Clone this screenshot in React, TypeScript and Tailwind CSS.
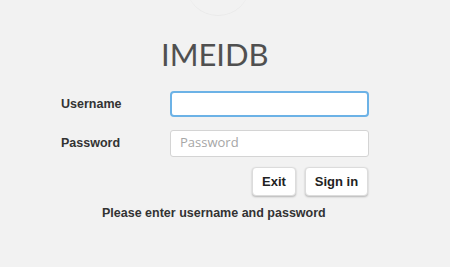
export default function App() {
  return (
    <div className="w-[450px] h-[267px] bg-[#f2f2f2] relative overflow-hidden" style={{ fontFamily: '"Liberation Sans", Arial, sans-serif' }}>
      <div className="absolute left-[186px] top-[-48px] w-[64px] h-[64px] rounded-full border-b border-[#e9e9e9]" />
      <div className="flex flex-col">
        <div className="pt-[34px] h-[88px] pl-[161px] text-[31px] leading-[40px] text-[#505050]" style={{ fontFamily: 'Lato, "Open Sans", sans-serif' }}>IMEIDB</div>
        <div className="flex items-center h-[30px] mt-[1px]">
          <div className="w-[170px] pl-[61px] text-[12.5px] font-bold text-[#333]">Username</div>
          <div className="w-[199px] h-[26px] rounded-[4px] border-2 border-[#6cb2e6] bg-white" />
        </div>
        <div className="flex items-center h-[28px] mt-[10px]">
          <div className="w-[170px] pl-[61px] text-[12.5px] font-bold text-[#333]">Password</div>
          <div className="w-[199px] h-[27px] rounded-[3px] border border-[#d4d4d4] bg-white flex items-center pl-[9px] text-[13px] text-[#a6a6a6]" style={{ fontFamily: '"Open Sans", sans-serif' }}>Password</div>
        </div>
        <div className="flex justify-end gap-[9px] pr-[82px] mt-[10px]">
          <div className="w-[44px] h-[29px] rounded-[4px] bg-white border border-[#dcdcdc] shadow-[0_1px_2px_rgba(0,0,0,0.25)] flex items-center justify-center text-[13px] font-bold text-[#222]">Exit</div>
          <div className="w-[63px] h-[29px] rounded-[4px] bg-white border border-[#dcdcdc] shadow-[0_1px_2px_rgba(0,0,0,0.25)] flex items-center justify-center text-[13px] font-bold text-[#222]">Sign in</div>
        </div>
        <div className="mt-[8px] pl-[102px] text-[12.5px] font-bold text-[#333]">Please enter username and password</div>
      </div>
    </div>
  );
}
